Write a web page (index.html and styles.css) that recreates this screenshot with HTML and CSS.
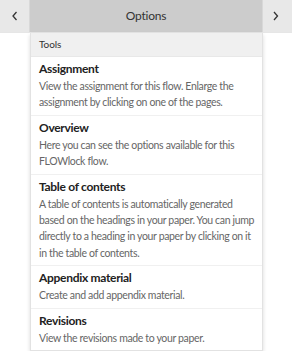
FILE: index.html
```html
<!DOCTYPE html>
<html>
  <head>
    <title>Options</title>
    <meta charset='UTF-8'>
    <link rel="stylesheet" href="styles.css">
  </head>
  <body>
    <div class='topBar'>
      <button class='navButton' aria-label='Previous'>
        <svg width='10' height='12' viewBox='0 0 10 12'><path d='M6.5 2 L3 6 L6.5 10' fill='none' stroke='#333' stroke-width='1.3'/></svg>
      </button>
      <div class='barTitle'>Options</div>
      <button class='navButton' aria-label='Next'>
        <svg width='10' height='12' viewBox='0 0 10 12'><path d='M3 2 L6.5 6 L3 10' fill='none' stroke='#333' stroke-width='1.3'/></svg>
      </button>
    </div>

    <div class='menu'>
      <div class='menuHeader'>Tools</div>

      <div class='menuItem'>
        <h3>Assignment</h3>
        <p>View the assignment for this flow. Enlarge the assignment by clicking on one of the pages.</p>
      </div>

      <div class='menuItem'>
        <h3>Overview</h3>
        <p>Here you can see the options available for this FLOWlock flow.</p>
      </div>

      <div class='menuItem'>
        <h3>Table of contents</h3>
        <p>A table of contents is automatically generated based on the headings in your paper. You can jump directly to a heading in your paper by clicking on it in the table of contents.</p>
      </div>

      <div class='menuItem'>
        <h3>Appendix material</h3>
        <p>Create and add appendix material.</p>
      </div>

      <div class='menuItem'>
        <h3>Revisions</h3>
        <p>View the revisions made to your paper.</p>
      </div>
    </div>
  </body>
</html>
```

FILE: styles.css
```css
:root {
  font-family: Lato, "Open Sans", sans-serif;
  background-color: #fff;
}

body {
  margin: 0;
  padding: 0;
}

.topBar {
  display: flex;
  height: 32px;
  background-color: #cccccc;
  border-bottom: 1px solid #e6e6e6;
}

.navButton {
  width: 30px;
  height: 32px;
  padding: 0;
  display: flex;
  align-items: center;
  justify-content: center;
  background-color: #e8e8e8;
  border: none;
}

.navButton:first-child {
  border-right: 1px solid #d8d8d8;
}

.navButton:last-child {
  border-left: 1px solid #d8d8d8;
  padding-right: 3px;
}

.barTitle {
  flex: 1;
  text-align: center;
  line-height: 32px;
  font-size: 12px;
  letter-spacing: -0.2px;
  color: #333;
}

.menu {
  width: 231px;
  margin-left: 30px;
  background-color: #fff;
  border: 1px solid #e2e2e2;
  border-top: none;
  box-shadow: 0 2px 4px rgba(0, 0, 0, 0.15);
}

.menuHeader {
  background-color: #f0f0f0;
  padding: 0 8px;
  height: 23px;
  line-height: 23px;
  font-size: 10px;
  letter-spacing: -0.1px;
  color: #333;
  border-bottom: 1px solid #e8e8e8;
}

.menuItem {
  padding: 3px 8px 4px;
  border-bottom: 1px solid #f0f0f0;
}

.menuItem:last-child {
  border-bottom: none;
}

.menuItem h3 {
  margin: 0;
  font-size: 12px;
  line-height: 18px;
  letter-spacing: -0.3px;
  font-weight: bold;
  color: #222;
}

.menuItem p {
  margin: 0;
  font-size: 10.5px;
  line-height: 16.4px;
  letter-spacing: -0.35px;
  color: #666;
}
```
